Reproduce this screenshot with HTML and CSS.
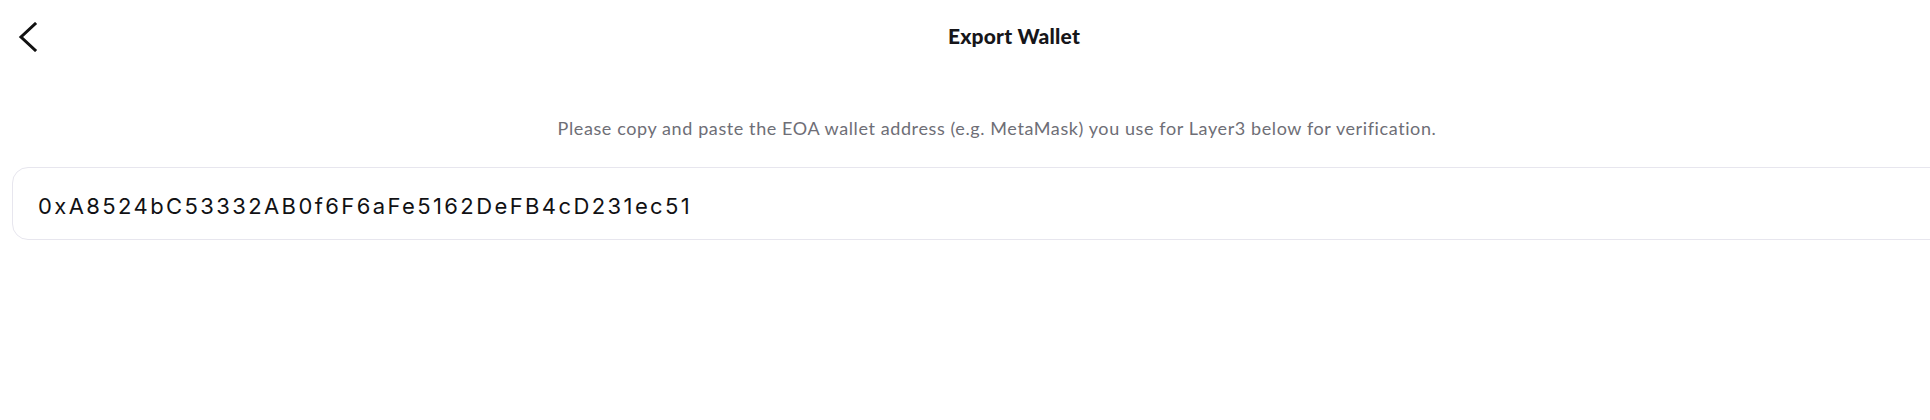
FILE: index.html
```html
<!DOCTYPE html>
<html lang="en">
<head>
<meta charset="utf-8">
<title>Export Wallet</title>
<link rel="stylesheet" href="styles.css">
</head>
<body>
<div class="page">
  <header class="header">
    <button class="back" aria-label="Back">
      <svg width="20" height="30" viewBox="0 0 20 30" fill="none">
        <path d="M17 2 L3 15 L17 28" stroke="#111" stroke-width="3" stroke-linecap="square" stroke-linejoin="miter"/>
      </svg>
    </button>
    <h1 class="title">Export Wallet</h1>
  </header>
  <p class="hint">Please copy and paste the EOA wallet address (e.g. MetaMask) you use for Layer3 below for verification.</p>
  <div class="field">
    <span class="address">0xA8524bC53332AB0f6F6aFe5162DeFB4cD231ec51</span>
  </div>
</div>
</body>
</html>
```

FILE: styles.css
```css
html, body {
  margin: 0;
  padding: 0;
  background: #ffffff;
  overflow: hidden;
}

.page {
  width: 1970px;
  padding: 0 0 0 12px;
  display: flex;
  flex-direction: column;
}

.header {
  display: flex;
  align-items: center;
  height: 72px;
}

.back {
  width: 34px;
  height: 34px;
  padding: 0 0 0 6px;
  border: 0;
  background: transparent;
  display: flex;
  align-items: center;
  justify-content: flex-start;
  cursor: pointer;
  margin-top: 2px;
}

.title {
  flex: 1;
  margin: -2px 0 0;
  text-align: center;
  font-family: "Lato", "Liberation Sans", sans-serif;
  font-weight: 900;
  font-size: 21px;
  color: #16161a;
  letter-spacing: 0.2px;
}

.hint {
  margin: 44px 0 0;
  text-align: center;
  font-family: "Lato", "Liberation Sans", sans-serif;
  font-size: 18px;
  color: #6e6e76;
  line-height: 24px;
  letter-spacing: 0.6px;
}

.field {
  margin-top: 27px;
  height: 71px;
  border: 1.5px solid #e7e6ee;
  border-radius: 16px;
  display: flex;
  align-items: center;
  padding-left: 25px;
}

.address {
  font-family: "Inter", "Liberation Sans", sans-serif;
  font-size: 22px;
  color: #111114;
  letter-spacing: 2.4px;
  margin-top: 4px;
}
```
